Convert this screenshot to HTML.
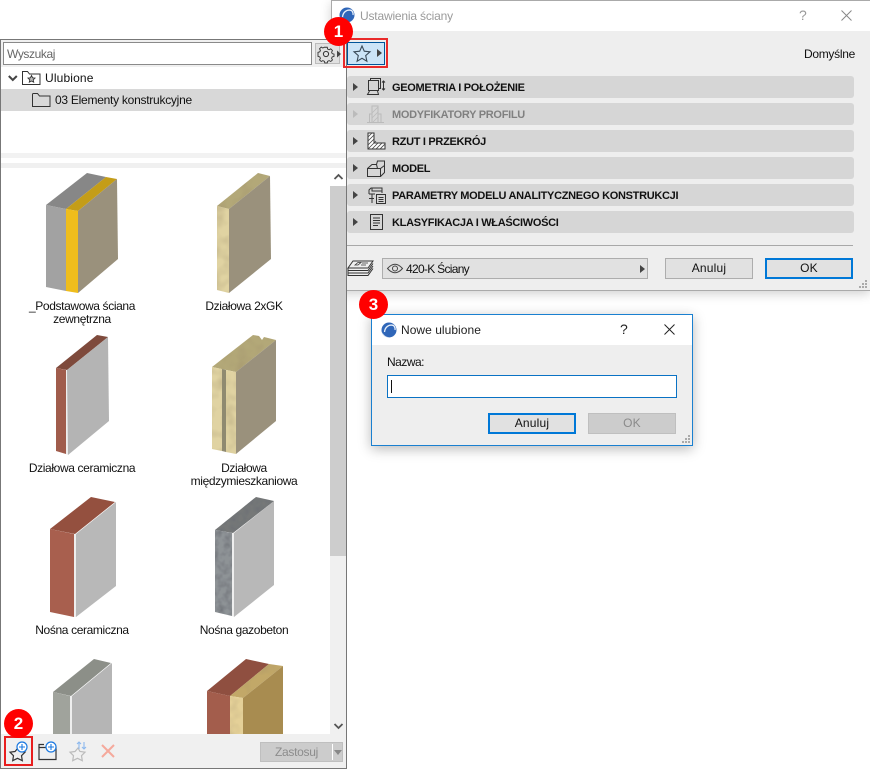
<!DOCTYPE html>
<html lang="pl"><head><meta charset="utf-8"><title>Ustawienia ściany</title>
<style>
html,body{margin:0;padding:0;background:#fff}
body{width:870px;height:769px;position:relative;overflow:hidden;font-family:"Liberation Sans",sans-serif;font-size:12px;color:#111}
.a{position:absolute;box-sizing:border-box}
.t{position:absolute;white-space:nowrap;line-height:14px}
.c{position:absolute;text-align:center;line-height:13px;width:160px;letter-spacing:-.37px}
.sec{position:absolute;left:347px;width:507px;height:22px;background:#d6d6d6;border-radius:3px}
.sec b{position:absolute;left:45px;top:5px;line-height:14px;font-size:11px;white-space:nowrap;color:#111;letter-spacing:-.3px}
.btn{position:absolute;box-sizing:border-box;background:#e1e1e1;border:1px solid #adadad;text-align:center;line-height:19px;letter-spacing:.2px}
.pri{border:2px solid #0078d7;line-height:17px}
.badge{position:absolute;width:29px;height:29px;border-radius:50%;background:#f00;color:#fff;text-align:center;font-weight:bold;font-size:17px;line-height:29px}
svg{position:absolute;overflow:visible}
</style></head><body>

<!-- main dialog background (behind the left panel) -->
<div class="a" style="left:331px;top:0;width:539px;height:291px;background:#eee;border:1px solid #aaa;border-right:0;box-shadow:0 3px 10px rgba(0,0,0,.18)"></div>
<div class="a" style="left:332px;top:1px;width:538px;height:30px;background:#fff"></div>

<!-- left panel -->
<div class="a" style="left:0;top:39px;width:347px;height:730px;border:1px solid #777;background:#fff"></div>
<div class="a" style="left:1px;top:40px;width:345px;height:27px;background:#f0f0f0"></div>
<div class="a" style="left:3px;top:42px;width:309px;height:23px;background:#fff;border:1px solid #8a8a8a"></div>
<div class="t" style="left:7px;top:47px;color:#666;letter-spacing:-.4px">Wyszukaj</div>
<div class="a" style="left:315px;top:43px;width:25px;height:21px;background:#e1e1e1;border:1px solid #bcbcbc"></div>
<svg style="left:317px;top:45px" width="24" height="18" viewBox="0 0 24 18"><g fill="none" stroke="#333" stroke-width="1"><circle cx="9" cy="9" r="2.600"/><path d="M7.600 1.500h2.800l.4 2 1.700.8 1.800-1 1.900 1.900-1 1.800.7 1.600 2 .5v2.600l-2 .5-.7 1.600 1 1.800-1.900 1.700-1.800-1-1.700.8-.4 1.800H7.600l-.4-1.800-1.700-.8-1.800 1-1.900-1.700 1-1.800-.7-1.600-2-.5V7.100l2-.5.7-1.600-1-1.800 1.900-1.900 1.800 1 1.700-.8z" transform="translate(.9 .9) scale(.9)"/></g><path d="M20 5.500l4 3.500-4 3.500z" fill="#444"/></svg>
<div class="a" style="left:1px;top:89px;width:345px;height:22px;background:#d8d8d8"></div>
<svg style="left:8px;top:75px" width="10" height="7" viewBox="0 0 10 7"><path d="M.8 1l4 4 4-4" fill="none" stroke="#444" stroke-width="2"/></svg>
<svg style="left:22px;top:70px" width="19" height="16" viewBox="0 0 19 16"><path d="M.5 14.500V1.500h5l2 2.500h10.500v10.500z" fill="#fff" stroke="#333"/><path d="M9.500 5.500l1.100 2.300 2.400.3-1.800 1.700.5 2.400-2.200-1.200-2.200 1.200.5-2.400L6 8.100l2.400-.3z" fill="#bbb" stroke="#333" stroke-width=".9"/></svg>
<div class="t" style="left:45px;top:71px;letter-spacing:.15px">Ulubione</div>
<svg style="left:32px;top:92px" width="19" height="16" viewBox="0 0 19 16"><path d="M.5 14.500V2.500q0-1 1-1h4l2 2.500h10.500v10.500z" fill="none" stroke="#333"/></svg>
<div class="t" style="left:55px;top:93px;letter-spacing:-.26px">03 Elementy konstrukcyjne</div>
<div class="a" style="left:1px;top:153px;width:345px;height:5px;background:#f2f2f2"></div>
<div class="a" style="left:1px;top:163px;width:345px;height:5px;background:#f0f0f0"></div>

<!-- scrollbar -->
<div class="a" style="left:330px;top:168px;width:16px;height:566px;background:#f0f0f0"></div>
<div class="a" style="left:330px;top:168px;width:16px;height:18px;background:#fff"></div>
<div class="a" style="left:330px;top:186px;width:16px;height:370px;background:#cdcdcd"></div>
<svg style="left:334px;top:173px" width="9" height="7"><path d="M.5 6l4-4 4 4" fill="none" stroke="#555" stroke-width="1.800"/></svg>
<svg style="left:334px;top:723px" width="9" height="7"><path d="M.5 1l4 4 4-4" fill="none" stroke="#555" stroke-width="1.800"/></svg>

<!-- walls -->
<svg style="left:0;top:0" width="330" height="734" viewBox="0 0 330 734">
<defs>
<filter id="n" x="0" y="0" width="100%" height="100%"><feTurbulence type="fractalNoise" baseFrequency=".08" numOctaves="2" seed="4" result="t"/><feColorMatrix in="t" type="matrix" values="0 0 0 0 .35  0 0 0 0 .28  0 0 0 0 .15  .9 0 0 0 -.36" result="m"/><feComposite in="m" in2="SourceAlpha" operator="in" result="c"/><feMerge><feMergeNode in="SourceGraphic"/><feMergeNode in="c"/></feMerge></filter>
<filter id="g" x="0" y="0" width="100%" height="100%"><feTurbulence type="fractalNoise" baseFrequency=".16" numOctaves="2" seed="9" result="t"/><feColorMatrix in="t" type="matrix" values="0 0 0 0 .15  0 0 0 0 .16  0 0 0 0 .18  1.500 0 0 0 -.55" result="m"/><feComposite in="m" in2="SourceAlpha" operator="in" result="c"/><feMerge><feMergeNode in="SourceGraphic"/><feMergeNode in="c"/></feMerge></filter>
</defs>
<polygon points="46,205 87,173 106,177 66,209" fill="#878787"/>
<polygon points="66,209 106,177 117,179 78,211" fill="#c49d18"/>
<polygon points="46,205 66,209 66,291 46,287" fill="#a2a2a2"/>
<polygon points="66,209 78,211 78,293 66,291" fill="#efbd1c"/>
<polygon points="78,211 117,179 118,259 78,293" fill="#9a917c"/>

<polygon points="217,206 258,173 270,176 229,209" fill="#b3a878" filter="url(#n)"/>
<polygon points="217,206 229,209 229,293 217,290" fill="#e0d3a2" filter="url(#n)"/>
<polygon points="229,209 270,176 271,259 229,293" fill="#9a917c"/>

<polygon points="56,368 97,335 108,337 67,370" fill="#7e4a3c"/>
<polygon points="56,368 66,370 66,454 56,451" fill="#a05c4c"/>
<polygon points="66,370 68,370 68,455 66,454" fill="#eee"/>
<polygon points="67,370 108,337 109,421 68,455" fill="#b4b4b4"/>

<polygon points="212,367 253,335 259,336 262,340 264,337 276,340 236,372" fill="#b3a878" filter="url(#n)"/>
<polygon points="212,367 222,369 222,451 212,449" fill="#e0d3a2" filter="url(#n)"/>
<polygon points="222,369 226,370 226,452 222,451" fill="#8f8a70"/>
<polygon points="226,370 236,372 236,454 226,452" fill="#e0d3a2" filter="url(#n)"/>
<polygon points="236,372 276,340 276,421 236,454" fill="#9a917c"/>

<polygon points="50,529 91,497 115,502 75,534" fill="#94503f"/>
<polygon points="50,529 74,534 74,617 50,612" fill="#a85f4e"/>
<polygon points="74,534 76,534 76,617 74,617" fill="#eee"/>
<polygon points="76,534 116,502 116,586 76,617" fill="#b8b8b8"/>

<polygon points="215,530 256,497 274,501 233,533" fill="#767878" filter="url(#g)"/>
<polygon points="215,530 232,533 232,616 215,612" fill="#8e9396" filter="url(#g)"/>
<polygon points="232,533 234,533 234,617 232,616" fill="#eee"/>
<polygon points="234,533 274,501 274,585 234,617" fill="#b8b8b8"/>

<polygon points="53,692 94,659 111,663 71,696" fill="#8c8f88"/>
<polygon points="53,692 70,696 70,734 53,734" fill="#a0a39c"/>
<polygon points="70,696 72,696 72,734 70,734" fill="#eee"/>
<polygon points="72,696 112,663 112,734 72,734" fill="#b5b5b5"/>

<polygon points="207,691 246,659 269,664 230,696" fill="#8f4f40"/>
<polygon points="230,696 269,664 283,666 243,698" fill="#c2a868" filter="url(#n)"/>
<polygon points="207,691 230,696 230,734 207,734" fill="#a35d4c"/>
<polygon points="230,696 243,698 243,734 230,734" fill="#e4d098" filter="url(#n)"/>
<polygon points="243,698 283,666 283,734 243,734" fill="#a88c50"/>
</svg>

<div class="c" style="left:2px;top:300px">_Podstawowa ściana<br>zewnętrzna</div>
<div class="c" style="left:164px;top:300px">Działowa 2xGK</div>
<div class="c" style="left:2px;top:462px">Działowa ceramiczna</div>
<div class="c" style="left:164px;top:462px">Działowa<br>międzymieszkaniowa</div>
<div class="c" style="left:2px;top:624px">Nośna ceramiczna</div>
<div class="c" style="left:164px;top:624px">Nośna gazobeton</div>

<!-- bottom toolbar -->
<div class="a" style="left:1px;top:734px;width:345px;height:34px;background:#f0f0f0"></div>
<svg style="left:9px;top:741px" width="20" height="21" viewBox="0 0 20 21"><path d="M9 7l2 3.500 5 .7-3.500 3.500.8 5-4.800-2.400-4.800 2.400.8-5L1 11.200l5-.7z" fill="none" stroke="#333" stroke-width="1.200"/><circle cx="13" cy="6" r="5" fill="#fff" stroke="#1a78e0" stroke-width="1.200"/><path d="M13 3v6M10 6h6" stroke="#1a78e0" stroke-width="1.100"/></svg>
<svg style="left:38px;top:741px" width="20" height="20" viewBox="0 0 20 20"><path d="M1 18.500V6.500h17v12z" fill="none" stroke="#333" stroke-width="1.200"/><path d="M1 6.500V3.500h5" fill="none" stroke="#333" stroke-width="1.200"/><circle cx="13" cy="6" r="5" fill="#fff" stroke="#1a78e0" stroke-width="1.200"/><path d="M13 3v6M10 6h6" stroke="#1a78e0" stroke-width="1.100"/></svg>
<svg style="left:69px;top:741px" width="20" height="21" viewBox="0 0 20 21"><path d="M9 7l2 3.500 5 .7-3.500 3.500.8 5-4.800-2.400-4.800 2.400.8-5L1 11.200l5-.7z" fill="none" stroke="#bbb" stroke-width="1.200"/><path d="M10 1v7M8 3l2-2 2 2M15 8V1M13 6l2 2 2-2" fill="none" stroke="#8cb8ee" stroke-width="1.100"/></svg>
<svg style="left:101px;top:744px" width="14" height="14"><path d="M1 1l12 12M13 1L1 13" stroke="#f5a99b" stroke-width="2"/></svg>
<div class="a" style="left:260px;top:742px;width:83px;height:20px;background:#ccc;border:1px solid #bfbfbf"></div>
<div class="t" style="left:275px;top:745px;color:#8c8c8c;letter-spacing:-.3px">Zastosuj</div>
<div class="a" style="left:332px;top:744px;width:1px;height:16px;background:#fff"></div>
<svg style="left:334px;top:750px" width="8" height="5"><path d="M0 0h8L4 5z" fill="#888"/></svg>
<div class="a" style="left:4px;top:736px;width:29px;height:30px;border:2px solid #e81e1e"></div>

<!-- main dialog content -->
<svg style="left:339px;top:7px" width="16" height="16" viewBox="0 0 16 16"><circle cx="8" cy="8" r="7.500" fill="#2f66b8"/><path d="M1 10a7 7 0 0 0 8 5.500c-4-.5-6-2-8-5.500z" fill="#c8d8ec"/><path d="M3.500 10C4 5 8 2 12.500 3.500c1.500 1.500 1.800 3 1.500 4.500" fill="none" stroke="#e8f0fa" stroke-width="1.300"/></svg>
<div class="t" style="left:360px;top:9px;color:#9a9a9a;letter-spacing:-.18px">Ustawienia ściany</div>
<div class="t" style="left:799px;top:8px;color:#999;font-size:14px">?</div>
<svg style="left:841px;top:10px" width="11" height="11"><path d="M.5.500l10 10M10.500.500l-10 10" stroke="#888" stroke-width="1"/></svg>

<div class="a" style="left:347px;top:42px;width:38px;height:23px;background:#cce4f7;border:1px solid #005499"></div>
<svg style="left:353px;top:45px" width="18" height="17" viewBox="0 0 18 17"><path d="M9 1l2.300 5.200 5.700.6-4.300 3.800 1.200 5.600L9 13.300l-4.900 2.900 1.200-5.600L1 6.800l5.700-.6z" fill="none" stroke="#3a4a58" stroke-width="1.100"/></svg>
<svg style="left:377px;top:49px" width="5" height="8"><path d="M0 0l5 4-5 4z" fill="#444"/></svg>
<div class="a" style="left:343px;top:38px;width:45px;height:30px;border:2px solid #e92a2a"></div>
<div class="t" style="left:804px;top:47px;letter-spacing:-.3px">Domyślne</div>

<div class="sec" style="top:76px"><b>GEOMETRIA I POŁOŻENIE</b></div>
<div class="sec" style="top:103px"><b style="color:#808080">MODYFIKATORY PROFILU</b></div>
<div class="sec" style="top:130px"><b>RZUT I PRZEKRÓJ</b></div>
<div class="sec" style="top:157px"><b>MODEL</b></div>
<div class="sec" style="top:184px"><b>PARAMETRY MODELU ANALITYCZNEGO KONSTRUKCJI</b></div>
<div class="sec" style="top:211px"><b>KLASYFIKACJA I WŁAŚCIWOŚCI</b></div>

<svg style="left:353px;top:76px" width="6" height="160" viewBox="0 0 6 160"><g fill="#444"><path d="M0 7l5 4-5 4z"/><path d="M0 34l5 4-5 4z" fill="#bbb"/><path d="M0 61l5 4-5 4z"/><path d="M0 88l5 4-5 4z"/><path d="M0 115l5 4-5 4z"/><path d="M0 142l5 4-5 4z"/></g></svg>
<svg style="left:366px;top:78px" width="20" height="19" viewBox="0 0 20 19"><g fill="none" stroke="#333"><path d="M2.500 2.500h10v10h-10zM4.500 2.500v-2h10v10h-2"/><path d="M3.500 13l-2 3.500h11l-1-3.500"/><path d="M17.500 3v9M16 4.500L17.500 3 19 4.500M16 10.500l1.500 1.500 1.500-1.500"/></g></svg>
<svg style="left:367px;top:105px" width="18" height="18" viewBox="0 0 18 18"><g fill="none" stroke="#bbb"><path d="M0 17.500h17M5 17V1h6v16M5 9H2.500v8M11 9h3v8"/><path d="M5 8l6-6M5 13l6-6M6 17l5-5" stroke-width=".8"/></g></svg>
<svg style="left:367px;top:132px" width="19" height="18" viewBox="0 0 19 18"><path d="M1 1h6v10h11v6H1z" fill="#fff" stroke="#333"/><path d="M1 5l4-4M1 9l6-6M1 13l6-6M1 17l8-8M5 17l6-6M9 17l6-6M13 17l5-5" stroke="#444" stroke-width=".8"/></svg>
<svg style="left:367px;top:160px" width="19" height="17" viewBox="0 0 19 17"><g fill="none" stroke="#333"><path d="M.5 8.500h13v8H.5zM13.500 16.500l4-4V5.500l-4 3M.5 8.500L5 4.500h4.500L10.500 1h7v4.500"/><path d="M9.500 4.500l1 4"/></g></svg>
<svg style="left:367px;top:187px" width="19" height="17" viewBox="0 0 19 17"><g fill="none" stroke="#333"><path d="M2 7V3l2-2h11v5M5 1v3h10M2 7h6M5 7v9M2 11.500h5"/><path d="M9.500 7.500h9v9h-9z" fill="#d6d6d6"/><path d="M11.500 10.500h5M11.500 12.500h5M11.500 14.500h5"/></g></svg>
<svg style="left:370px;top:214px" width="13" height="16" viewBox="0 0 13 16"><g fill="none" stroke="#333"><path d="M.5.500h12v15H.5z"/><path d="M3 4h7M3 6.500h7M3 9h7M3 11.500h5"/></g></svg>

<div class="a" style="left:347px;top:245px;width:506px;height:1px;background:#a8a8a8"></div>
<svg style="left:347px;top:260px" width="27" height="16" viewBox="0 0 27 16"><g fill="none" stroke="#333"><path d="M6 1h20l-5 7H1zM1 8v2.500h20l5-7M1 10.500V13h20l5-7M1 13v2.500h20l5-7"/><path d="M8 5l3-2.500h3L11 5zM15 3h6M14 5h5" stroke-width=".8"/></g></svg>
<div class="a" style="left:382px;top:258px;width:266px;height:21px;background:#e1e1e1;border:1px solid #adadad"></div>
<svg style="left:387px;top:263px" width="16" height="11" viewBox="0 0 16 11"><path d="M.5 5.500Q8-3 15.500 5.500 8 14 .5 5.500z" fill="none" stroke="#444"/><circle cx="8" cy="5.500" r="2.500" fill="none" stroke="#444"/></svg>
<div class="t" style="left:406px;top:262px;letter-spacing:-.7px">420-K Ściany</div>
<svg style="left:640px;top:265px" width="5" height="8"><path d="M0 0l5 4-5 4z" fill="#444"/></svg>
<div class="btn" style="left:665px;top:258px;width:88px;height:21px">Anuluj</div>
<div class="btn pri" style="left:765px;top:258px;width:88px;height:21px">OK</div>
<svg style="left:858px;top:279px" width="10" height="10"><g fill="#aaa"><rect x="7" y="1" width="2" height="2"/><rect x="4" y="4" width="2" height="2"/><rect x="7" y="4" width="2" height="2"/><rect x="1" y="7" width="2" height="2"/><rect x="4" y="7" width="2" height="2"/><rect x="7" y="7" width="2" height="2"/></g></svg>

<!-- new favorite dialog -->
<div class="a" style="left:371px;top:314px;width:322px;height:132px;background:#eee;border:1px solid #1a80d0;box-shadow:0 3px 12px rgba(0,0,0,.28)"></div>
<div class="a" style="left:372px;top:315px;width:320px;height:30px;background:#fff"></div>
<svg style="left:381px;top:322px" width="16" height="16" viewBox="0 0 16 16"><circle cx="8" cy="8" r="7.500" fill="#2f66b8"/><path d="M1 10a7 7 0 0 0 8 5.500c-4-.5-6-2-8-5.500z" fill="#c8d8ec"/><path d="M3.500 10C4 5 8 2 12.500 3.500c1.500 1.500 1.800 3 1.500 4.500" fill="none" stroke="#e8f0fa" stroke-width="1.300"/></svg>
<div class="t" style="left:401px;top:323px;color:#222;letter-spacing:.04px">Nowe ulubione</div>
<div class="t" style="left:620px;top:322px;font-size:14px;color:#222">?</div>
<svg style="left:664px;top:324px" width="11" height="11"><path d="M.5.500l10 10M10.500.500l-10 10" stroke="#222" stroke-width="1"/></svg>
<div class="t" style="left:387px;top:355px;letter-spacing:-.5px">Nazwa:</div>
<div class="a" style="left:387px;top:375px;width:290px;height:23px;background:#fff;border:1px solid #0a72c4"></div>
<div class="a" style="left:391px;top:380px;width:1px;height:13px;background:#111"></div>
<div class="btn pri" style="left:488px;top:413px;width:88px;height:21px">Anuluj</div>
<div class="btn" style="left:588px;top:413px;width:88px;height:21px;background:#ccc;border-color:#bfbfbf;color:#8a8a8a">OK</div>
<svg style="left:681px;top:434px" width="10" height="10"><g fill="#aaa"><rect x="7" y="1" width="2" height="2"/><rect x="4" y="4" width="2" height="2"/><rect x="7" y="4" width="2" height="2"/><rect x="1" y="7" width="2" height="2"/><rect x="4" y="7" width="2" height="2"/><rect x="7" y="7" width="2" height="2"/></g></svg>

<!-- badges -->
<div class="badge" style="left:324px;top:17px">1</div>
<div class="badge" style="left:4px;top:709px">2</div>
<div class="badge" style="left:359px;top:290px">3</div>
</body></html>
